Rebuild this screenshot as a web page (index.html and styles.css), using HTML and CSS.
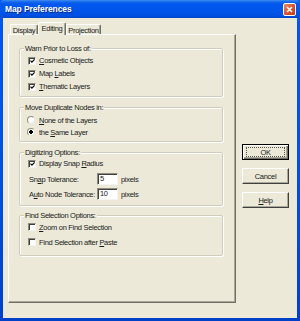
FILE: index.html
```html
<!DOCTYPE html>
<html>
<head>
<meta charset="utf-8">
<link rel="stylesheet" href="styles.css">
</head>
<body>
<div class="window">
  <div class="titlebar">
    <span class="title">Map Preferences</span>
    <span class="close">
      <svg width="11" height="11" viewBox="0 0 11 11"><path d="M3 3 L8 8 M8 3 L3 8" stroke="#fff" stroke-width="1.6" fill="none"/></svg>
    </span>
  </div>
  <div class="client">
    <div class="tabs-area">
      <div class="tabstrip">
        <div class="tab t-display">Display</div>
        <div class="tab t-editing active">Editing</div>
        <div class="tab t-projection">Projection</div>
      </div>
      <div class="panel">
        <div class="group g1">
          <div class="legend">Warn Prior to Loss of:</div>
          <div class="row r13"><span class="check on"><svg width="6" height="6" viewBox="0 0 6 6"><path d="M0.6 2.6 L2.3 4.3 L5.5 1" stroke="#000" stroke-width="1.4" fill="none"/></svg></span><span class="lbl"><u>C</u>osmetic Objects</span></div>
          <div class="row r13"><span class="check on"><svg width="6" height="6" viewBox="0 0 6 6"><path d="M0.6 2.6 L2.3 4.3 L5.5 1" stroke="#000" stroke-width="1.4" fill="none"/></svg></span><span class="lbl">Map <u>L</u>abels</span></div>
          <div class="row r13"><span class="check on"><svg width="6" height="6" viewBox="0 0 6 6"><path d="M0.6 2.6 L2.3 4.3 L5.5 1" stroke="#000" stroke-width="1.4" fill="none"/></svg></span><span class="lbl"><u>T</u>hematic Layers</span></div>
        </div>
        <div class="group g2">
          <div class="legend">Move Duplicate Nodes in:</div>
          <div class="row r12 first"><span class="radio"></span><span class="lbl"><u>N</u>one of the Layers</span></div>
          <div class="row r12"><span class="radio on"></span><span class="lbl">the <u>S</u>ame Layer</span></div>
        </div>
        <div class="group g3">
          <div class="legend">Digitizing Options:</div>
          <div class="row r11"><span class="check on"><svg width="6" height="6" viewBox="0 0 6 6"><path d="M0.6 2.6 L2.3 4.3 L5.5 1" stroke="#000" stroke-width="1.4" fill="none"/></svg></span><span class="lbl">Display Snap <u>R</u>adius</span></div>
          <div class="row r12 field f1"><span class="flabel">Sn<u>a</u>p Tolerance:</span><span class="input">5</span><span class="unit">pixels</span></div>
          <div class="row r12 field f2"><span class="flabel">A<u>u</u>to Node Tolerance:</span><span class="input">10</span><span class="unit">pixels</span></div>
        </div>
        <div class="group g4">
          <div class="legend">Find Selection Options:</div>
          <div class="row r12"><span class="check"></span><span class="lbl"><u>Z</u>oom on Find Selection</span></div>
          <div class="row r12 second"><span class="check"></span><span class="lbl">Find Selection after <u>P</u>aste</span></div>
        </div>
      </div>
    </div>
    <div class="buttons">
      <div class="btn default"><span class="focus">OK</span></div>
      <div class="btn">Cancel</div>
      <div class="btn"><u>H</u>elp</div>
    </div>
  </div>
</div>
</body>
</html>
```

FILE: styles.css
```css
* { box-sizing: border-box; }
html, body { margin: 0; padding: 0; background: #ECE9D8; }
body {
  font-family: "Liberation Sans", Arial, sans-serif;
  font-size: 7.5px;
  letter-spacing: -0.3px;
  color: #1a1a1a;
}
u { text-decoration: underline; text-underline-offset: 1px; }

.window {
  width: 300px;
  height: 321px;
  display: flex;
  flex-direction: column;
  background: linear-gradient(#0058EE, #0050E0 60%, #0040C8);
}

.titlebar {
  height: 18px;
  flex: none;
  display: flex;
  align-items: center;
  justify-content: space-between;
  padding: 0 4px 0 5px;
  background: linear-gradient(#3D8DF5 0px, #1466E8 2px, #0058EE 4px, #0055EA 11px, #0050DE 16px, #0046C8 18px);
  border-radius: 4px 4px 0 0;
}
.title {
  color: #fff;
  font-family: "Liberation Sans", Arial, sans-serif;
  font-weight: bold;
  font-size: 8.5px;
  letter-spacing: -0.1px;
  text-shadow: 1px 1px 0 #0A2A8A;
}
.close {
  width: 13px;
  height: 13px;
  border: 1px solid #fff;
  border-radius: 2px;
  background: linear-gradient(135deg, #EA8B6D, #D9552F 50%, #C23B16);
  display: flex;
  align-items: center;
  justify-content: center;
}
.close svg { display: block; }

.client {
  flex: 1;
  margin: 0 3px 3px 3px;
  background: #ECE9D8;
  display: flex;
  padding: 4px 0 0 5px;
}

.tabs-area { width: 228px; flex: none; display: flex; flex-direction: column; }
.tabstrip {
  height: 12px;
  display: flex;
  align-items: flex-end;
  padding-left: 2px;
  position: relative;
  z-index: 1;
}
.tab {
  height: 10px;
  border: 1px solid #fff;
  border-right-color: #716F64;
  border-bottom: none;
  border-radius: 2px 2px 0 0;
  box-shadow: inset -1px 0 #ACA899;
  display: flex;
  align-items: center;
  justify-content: center;
  padding-top: 1px;
  background: #ECE9D8;
}
.t-display { width: 28px; }
.t-editing { width: 28px; }
.t-projection { width: 35px; }
.tab.active {
  height: 13px;
  margin-bottom: -1px;
  padding-bottom: 2px;
}

.panel {
  height: 269px;
  border: 1px solid #fff;
  border-right-color: #716F64;
  border-bottom-color: #716F64;
  box-shadow: inset -1px -1px #ACA899;
  padding: 13px 12px 0 10px;
  display: flex;
  flex-direction: column;
}

.group {
  width: 204px;
  border: 1px solid #D0CDBE;
  border-radius: 2px;
  box-shadow: inset 1px 1px #fff, 1px 1px #fff;
}
.legend {
  width: fit-content;
  height: 11px;
  line-height: 11px;
  margin: -6px 0 0 4px;
  padding: 0 1px;
  background: #ECE9D8;
}
.g1 { padding-bottom: 3px; }
.g2 { margin-top: 10px; padding-bottom: 3px; }
.g3 { margin-top: 10px; padding-bottom: 5px; }
.g4 { margin-top: 9px; padding-bottom: 7px; }

.row { display: flex; align-items: center; padding-left: 8px; }
.r13 { height: 13px; }
.r12 { height: 12px; }
.r11 { height: 11px; }
.g2 .first { margin-top: 1px; }
.f1 { margin-top: 4px; }
.f2 { margin-top: 3px; }
.g4 .second { margin-top: 3px; }

.check {
  width: 8px;
  height: 8px;
  flex: none;
  background: #fff;
  border: 1px solid #8E8B7F;
  border-right-color: #F5F4EE;
  border-bottom-color: #F5F4EE;
  box-shadow: inset 1px 1px #404040;
  display: flex;
  align-items: center;
  justify-content: center;
}
.check svg { display: block; margin: 1px 0 0 1px; }
.radio {
  width: 8px;
  height: 8px;
  flex: none;
  border-radius: 50%;
  background: #fff;
  border: 1px solid #8E8B7F;
  border-right-color: #E8E6DC;
  border-bottom-color: #E8E6DC;
  margin-left: -1px;
}
.radio.on { background: radial-gradient(circle, #000 0 1.6px, #fff 2px); }
.lbl { margin-left: 3px; white-space: nowrap; }
.g2 .lbl { margin-left: 4px; }

.field { padding-left: 9px; }
.flabel { width: 68px; white-space: nowrap; }
.input {
  width: 21px;
  height: 12px;
  background: #fff;
  border: 1px solid #8E8B7F;
  border-right-color: #F5F4EE;
  border-bottom-color: #F5F4EE;
  box-shadow: inset 1px 1px #404040;
  padding: 0 0 0 2px;
  line-height: 10px;
}
.unit { margin-left: 3px; }

.buttons {
  margin: 122px 0 0 6px;
  display: flex;
  flex-direction: column;
  gap: 8px;
}
.btn {
  width: 47px;
  height: 16px;
  border: 1px solid #fff;
  border-right-color: #404040;
  border-bottom-color: #404040;
  box-shadow: inset -1px -1px #ACA899;
  display: flex;
  align-items: center;
  justify-content: center;
  background: #ECE9D8;
}
.btn.default {
  border: 1px solid #000;
  box-shadow: inset 1px 1px #fff, inset -1px -1px #716F64, inset -2px -2px #ACA899;
}
.focus {
  width: 39px;
  height: 10px;
  border: 1px dotted #555;
  display: flex;
  align-items: center;
  justify-content: center;
}
```
